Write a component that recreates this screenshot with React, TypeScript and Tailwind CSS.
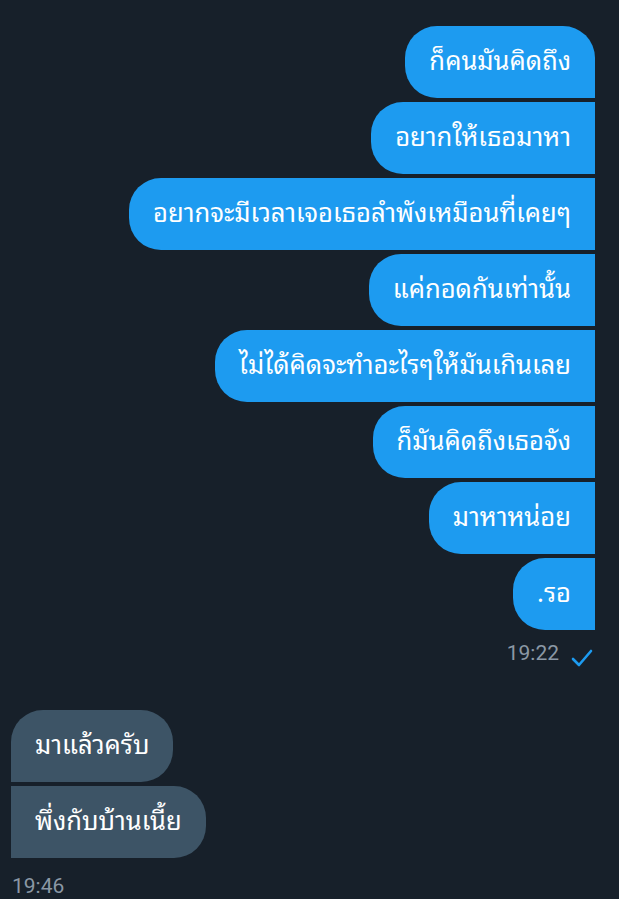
const sent = [
  "ก็คนมันคิดถึง",
  "อยากให้เธอมาหา",
  "อยากจะมีเวลาเจอเธอลำพังเหมือนที่เคยๆ",
  "แค่กอดกันเท่านั้น",
  "ไม่ได้คิดจะทำอะไรๆให้มันเกินเลย",
  "ก็มันคิดถึงเธอจัง",
  "มาหาหน่อย",
  ".รอ",
];

const received = ["มาแล้วครับ", "พึ่งกับบ้านเนี้ย"];

const thai = { fontFamily: '"Noto Sans Thai Looped", "Noto Sans Thai UI", sans-serif' };
const meta = { fontFamily: "Roboto, sans-serif" };

const App = () => {
  return (
    <div className="min-h-screen w-[619px] h-[899px] overflow-hidden bg-[#17202a] text-white">
      <div className="flex flex-col items-end gap-1 pt-[26px] pr-[24px]">
        {sent.map((text, i) => (
          <div
            key={i}
            style={thai}
            className={`h-[72px] flex items-center px-6 bg-[#1d9bf0] text-[25.6px] leading-none rounded-l-[32px] ${
              i === 0 ? "rounded-tr-[32px]" : ""
            }`}
          >
            <span className="-mt-[6px]">{text}</span>
          </div>
        ))}
        <div className="flex items-center gap-3 mt-[4px] text-[21px] text-[#8b98a5]" style={meta}>
          <span>19:22</span>
          <svg width="22" height="18" viewBox="0 0 22 18" className="mt-2 mr-[2px]">
            <path d="M2 10 L8 16 L20 2" fill="none" stroke="#1d9bf0" strokeWidth="2.6" strokeLinecap="round" strokeLinejoin="round" />
          </svg>
        </div>
      </div>

      <div className="flex flex-col items-start gap-1 mt-[40px] pl-[11px]">
        {received.map((text, i) => (
          <div
            key={i}
            style={thai}
            className={`h-[72px] flex items-center px-6 bg-[#3d5466] text-[25.6px] leading-none rounded-r-[32px] ${
              i === 0 ? "rounded-tl-[32px]" : ""
            }`}
          >
            <span className="-mt-[6px]">{text}</span>
          </div>
        ))}
        <div className="mt-[9px] ml-[1px] text-[21px] text-[#8b98a5]" style={meta}>
          19:46
        </div>
      </div>
    </div>
  );
};

export default App;
